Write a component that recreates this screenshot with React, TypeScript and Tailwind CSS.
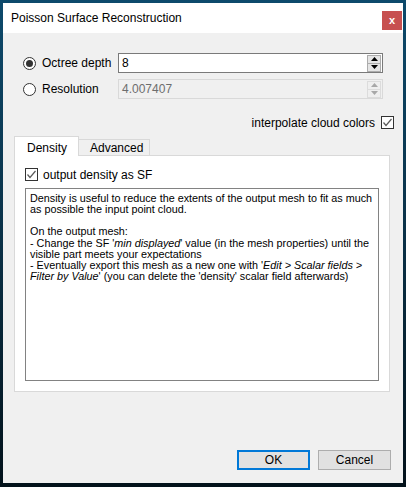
import React from "react";

const font = { fontFamily: '"Liberation Sans", Arial, sans-serif' };

function Radio({ checked }: { checked?: boolean }) {
  return (
    <div className="w-[13px] h-[13px] rounded-full border border-[#333333] bg-white flex items-center justify-center shrink-0">
      {checked && <div className="w-[7px] h-[7px] rounded-full bg-[#333333]" />}
    </div>
  );
}

function Check() {
  return (
    <div className="w-[13px] h-[13px] border border-[#333333] bg-white flex items-center justify-center shrink-0">
      <svg width="11" height="11" viewBox="0 0 11 11">
        <polyline points="1.5,5.5 4,8.5 9.5,2" fill="none" stroke="#5a5a5a" strokeWidth="1.2" />
      </svg>
    </div>
  );
}

function Tri({ up, color }: { up?: boolean; color: string }) {
  return (
    <svg width="7" height="4" viewBox="0 0 7 4">
      {up ? <polygon points="0,4 7,4 3.5,0" fill={color} /> : <polygon points="0,0 7,0 3.5,4" fill={color} />}
    </svg>
  );
}

function Spin({ value, disabled }: { value: string; disabled?: boolean }) {
  const b = disabled ? "border-[#d9d9d9]" : "border-[#7a7a7a]";
  const bb = disabled ? "border-[#dcdcdc] bg-[#efefef]" : "border-[#acacac] bg-[#e5e5e5]";
  const tc = disabled ? "#a8a8a8" : "#000000";
  return (
    <div className={`flex items-center w-[265px] h-[20px] border ${b} ${disabled ? "bg-[#f0f0f0]" : "bg-white"}`}>
      <span className={`pl-[3px] text-[12px] ${disabled ? "text-[#6d6d6d]" : "text-black"}`}>{value}</span>
      <div className="ml-auto mr-[1px] flex flex-col">
        <div className={`w-[14px] h-[9px] border ${bb} flex items-center justify-center`}>
          <Tri up color={tc} />
        </div>
        <div className={`w-[14px] h-[9px] -mt-px border ${bb} flex items-center justify-center`}>
          <Tri color={tc} />
        </div>
      </div>
    </div>
  );
}

export default function App() {
  return (
    <div
      className="w-[406px] h-[487px] p-[3px] bg-gradient-to-b from-[#0d4a6c] via-[#0a3046] to-[#03121b]"
      style={font}
    >
      <div className="w-[400px] h-[480px] flex flex-col">
        {/* title bar */}
        <div className="h-[30px] bg-white flex items-start shrink-0">
          <span className="ml-[8px] mt-[8px] text-[12px] text-black leading-[15px]">Poisson Surface Reconstruction</span>
          <div className="ml-auto mr-[1px] mt-[8px] w-[20px] h-[19px] bg-[#c75050] flex items-center justify-center">
            <span className="text-white text-[11px] font-bold leading-none -mt-px">x</span>
          </div>
        </div>
        {/* body */}
        <div className="flex-1 bg-[#f0f0f0] flex flex-col px-[11px] text-[12px] text-black">
          <div className="mt-[20px] flex items-center h-[20px]">
            <div className="w-[104px] pl-[9px] flex items-center gap-[6px]">
              <Radio checked />
              <span>Octree depth</span>
            </div>
            <Spin value="8" />
          </div>
          <div className="mt-[6px] flex items-center h-[20px]">
            <div className="w-[104px] pl-[9px] flex items-center gap-[6px]">
              <Radio />
              <span>Resolution</span>
            </div>
            <Spin value="4.007407" disabled />
          </div>
          <div className="mt-[17px] flex items-center justify-end h-[13px] -mr-[2px] gap-[6px]">
            <span>interpolate cloud colors</span>
            <Check />
          </div>
          {/* tabs */}
          <div className="mt-[7px] flex items-end h-[19px]">
            <div className="w-[65px] h-[20px] border border-b-0 border-[#d9d9d9] bg-white relative z-10 -mb-px pl-[12px] pt-[2px]">
              Density
            </div>
            <div className="w-[71px] h-[16px] border border-b-0 border-l-0 border-[#d9d9d9] bg-[#f0f0f0] pl-[11px] leading-[16px]">
              Advanced
            </div>
          </div>
          <div className="w-[376px] h-[237px] border border-[#d9d9d9] bg-white flex flex-col px-[10px]">
            <div className="mt-[12px] flex items-center gap-[5px] h-[13px]">
              <Check />
              <span>output density as SF</span>
            </div>
            <div className="mt-[7px] h-[193px] border border-[#828282] bg-white px-[4px] pt-[4px] text-[10.8px] leading-[11.15px] whitespace-nowrap">
              <div>Density is useful to reduce the extents of the output mesh to fit as much</div>
              <div>as possible the input point cloud.</div>
              <div>&nbsp;</div>
              <div>On the output mesh:</div>
              <div>
                - Change the SF '<i>min displayed</i>' value (in the mesh properties) until the
              </div>
              <div>visible part meets your expectations</div>
              <div>
                - Eventually export this mesh as a new one with '<i>Edit &gt; Scalar fields &gt;</i>
              </div>
              <div>
                <i>Filter by Value</i>' (you can delete the 'density' scalar field afterwards)
              </div>
            </div>
          </div>
          {/* buttons */}
          <div className="mt-auto mb-[13px] flex justify-end gap-[8px] pr-[1px]">
            <div className="w-[73px] h-[20px] border-2 border-[#0078d7] bg-[#e1e1e1] flex items-center justify-center">
              OK
            </div>
            <div className="w-[73px] h-[20px] border border-[#adadad] bg-[#e1e1e1] flex items-center justify-center">
              Cancel
            </div>
          </div>
        </div>
      </div>
    </div>
  );
}
